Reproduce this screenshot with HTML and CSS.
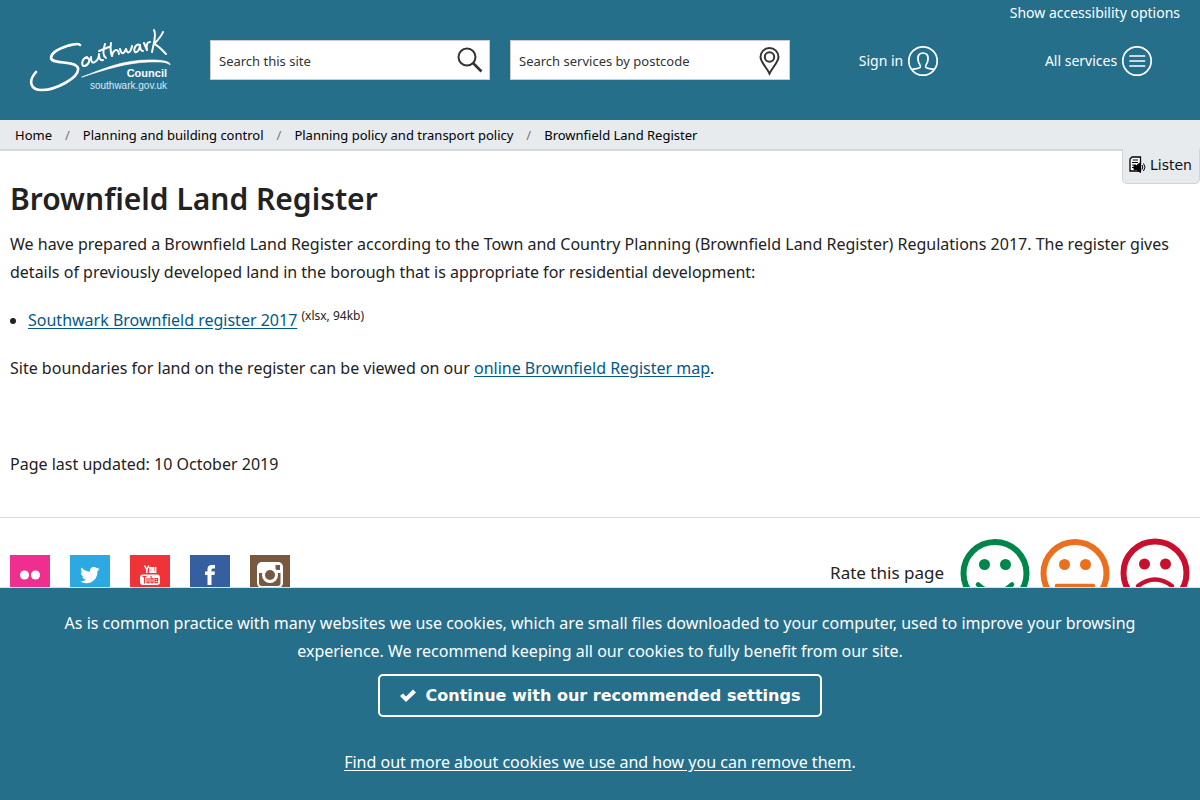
FILE: index.html
```html
<!DOCTYPE html>
<html lang="en">
<head>
<meta charset="utf-8">
<meta name="viewport" content="width=device-width, initial-scale=1">
<title>Brownfield Land Register - Southwark Council</title>
<link rel="stylesheet" href="styles.css">
</head>
<body>
<header class="site-header">
  <div class="access-row"><a class="access-link" href="#">Show accessibility options</a></div>
  <div class="header-grid">
    <a class="logo" href="#" aria-label="Southwark Council home">
      <svg width="142" height="68" viewBox="29 26 142 68" fill="none" stroke="#fff" stroke-linecap="round" stroke-linejoin="round">
        <path stroke-width="2.6" d="M80 45C79 43 74 44 67 46C58 49 51 53 51 58C52 65 75 60 78 68C80 78 55 90 42 90C30 90 28 81 36 72"/>
        <path stroke-width="2" d="M87 57C81 59 81 67 85 66C90 64 91 57 86 58M91 57C91 61 92 64 95 62C98 60 99 57 99 54C99 58 100 61 103 60M105 44C103 50 103 56 106 58M99 51L109 47M111 43C110 48 111 54 112 56C113 50 118 47 119 54M120 49C121 53 123 56 126 49C127 53 130 55 132 46M140 45C136 43 133 49 135 52C138 53 140 48 140 45C140 49 141 51 143 51M144 43L147 50C146 45 147 42 150 42M154 30C157 35 153 46 152 52M163 32C161 37 157 41 154 44C158 45 162 50 166 54"/>
        <path fill="#fff" stroke-width=".7" d="M82 77C106 68 122 60 151 60C160 60 171 61 170 65C167 61 155 62 148 62C126 63 107 69 82 77Z"/>
        <text class="logo-name" x="167" y="77" text-anchor="end">Council</text>
        <text class="logo-url" x="167" y="89" text-anchor="end">southwark.gov.uk</text>
      </svg>
    </a>
    <form class="search">
      <input class="search-input" type="text" placeholder="Search this site" aria-label="Search this site">
      <button class="search-button" type="button" aria-label="Search">
        <svg width="40" height="38" viewBox="449 41 40 38" fill="none" stroke="#333"><circle cx="467" cy="57" r="8.500" stroke-width="2"/><path stroke-width="2.600" d="M473 63L481.500 71.500"/></svg>
      </button>
    </form>
    <form class="search">
      <input class="search-input" type="text" placeholder="Search services by postcode" aria-label="Search services by postcode">
      <button class="search-button" type="button" aria-label="Find by postcode">
        <svg width="40" height="38" viewBox="749 41 40 38" fill="none" stroke="#333" stroke-width="2"><path d="M769.500 73.500C767 68 760.500 62 760.500 57A9 9 0 0 1 778.500 57C778.500 62 772 68 769.500 73.500Z"/><circle cx="769.500" cy="57" r="4.700"/></svg>
      </button>
    </form>
    <a class="header-link" href="#">Sign in
      <svg width="32" height="32" viewBox="0 0 32 32" fill="none" stroke="#fff" stroke-width="1.700"><circle cx="16" cy="16" r="14.200"/><path d="M5 24.500C8 23.500 11 24 13.200 22.300C14.200 21 12.500 19.500 11.500 17C9.800 11 12 8 16 8C20 8 22.200 11 20.500 17C19.500 19.500 17.800 21 18.800 22.300C21 24 24 23.500 27 24.500"/></svg>
    </a>
    <a class="header-link" href="#">All services
      <svg width="32" height="32" viewBox="0 0 32 32" fill="none" stroke="#fff" stroke-width="1.700"><circle cx="16" cy="16" r="14.200"/><path stroke-linecap="round" d="M9 11H23.500M9 16H23.500M9 21H23.500"/></svg>
    </a>
  </div>
</header>
<nav class="breadcrumbs" aria-label="Breadcrumb">
  <a class="crumb" href="#">Home</a><span class="crumb-sep">/</span>
  <a class="crumb" href="#">Planning and building control</a><span class="crumb-sep">/</span>
  <a class="crumb" href="#">Planning policy and transport policy</a><span class="crumb-sep">/</span>
  <a class="crumb" href="#" aria-current="page">Brownfield Land Register</a>
  <button class="listen" type="button">
    <svg width="18" height="18" viewBox="0 0 18 18" fill="none" stroke="#000"><path fill="#fff" stroke-width="1.300" d="M3 1H11.500V15H1V3Z"/><path d="M3.500 4H9M3 6.500H9M3 9H7M3 11.500H5"/><path fill="#000" d="M5 9.500H7.500L11.500 6.500V16.500L7.500 13.500H5Z"/><path d="M13 9Q14.500 11 13 13.500M14.500 7.500Q17.500 11 14.500 15"/></svg>
    Listen
  </button>
</nav>
<main class="content">
  <h1 class="title">Brownfield Land Register</h1>
  <p class="para">We have prepared a Brownfield Land Register according to the Town and Country Planning (Brownfield Land Register) Regulations 2017. The register gives details of previously developed land in the borough that is appropriate for residential development:</p>
  <ul class="files">
    <li><a class="link" href="#">Southwark Brownfield register 2017</a> <span class="file-info">(xlsx, 94kb)</span></li>
  </ul>
  <p class="para">Site boundaries for land on the register can be viewed on our <a class="link" href="#">online Brownfield Register map</a>.</p>
  <p class="para updated">Page last updated: 10 October 2019</p>
</main>
<footer class="site-footer">
  <div class="social">
    <a class="social-link flickr" href="#" aria-label="Flickr"><svg width="40" height="40" viewBox="0 0 40 40" fill="#fff"><circle cx="14.500" cy="20" r="4.600"/><circle cx="25.500" cy="20" r="4.600"/></svg></a>
    <a class="social-link twitter" href="#" aria-label="Twitter"><svg width="40" height="40" viewBox="0 0 40 40"><path fill="#fff" d="M30 13.800L27.400 16.200C28 23.500 22 28.500 16 28.200C13.800 28.200 12 27.500 10.500 26.300C13 26.500 15 25.800 16 24.600C14 24.400 12.700 23.300 12.200 21.700H13.800C12 21 10.800 19.500 10.800 17.300L12.500 17.800C11 16.500 10.500 14.500 11.600 12.600C13.700 15.200 16.700 16.600 20 16.700C19.500 13.500 22 11.600 24.200 12C25.500 12.100 26.300 12.700 26.900 13.300L29.300 12.400L27.700 14.500Z"/></svg></a>
    <a class="social-link youtube" href="#" aria-label="YouTube"><svg width="40" height="40" viewBox="0 0 40 40" fill="none" stroke-width="1.500"><path stroke="#fff" d="M14.500 10.500L16.800 14.500L19 10.500M16.800 14V18M20 12.700H22V17.200H20ZM23.600 12V17.200H25.500M25.600 12V18"/><rect x="10" y="19.500" width="20" height="10.500" rx="3" fill="#fff"/><path stroke="#ee3439" stroke-width="1.200" d="M12.500 21.700H16.500M14.500 21.700V28.500M17 23V27.700H19V23M19 27V28.500M21 21V28M21 23.500H23V27.700H21M27.500 26.500V27.700H25V23.500H27.500V25.500H25"/></svg></a>
    <a class="social-link facebook" href="#" aria-label="Facebook"><svg width="40" height="40" viewBox="0 0 40 40"><path fill="#fff" d="M17.500 30V20H15V16.500H17.500V14C17.500 11.500 19 10 22 10H25V13.500H23C22 13.500 21.500 14 21.500 15V16.500H25L24.500 20H21.500V30Z"/></svg></a>
    <a class="social-link instagram" href="#" aria-label="Instagram"><svg width="40" height="40" viewBox="0 0 40 40"><rect x="7" y="7" width="26" height="26" rx="5" fill="#fff"/><rect x="25.500" y="10" width="4.500" height="5" fill="#785940"/><path fill="#785940" d="M9 18H30.500V28Q30.500 31 27.500 31H12Q9 31 9 28Z"/><circle cx="20" cy="20" r="8" fill="#fff"/><circle cx="20" cy="20" r="5" fill="#785940"/></svg></a>
  </div>
  <div class="rating">
    <span class="rating-label">Rate this page</span>
    <button class="face good" type="button" aria-label="Good"><svg width="70" height="70" viewBox="0 0 70 70" fill="none" stroke="currentColor"><circle cx="35" cy="35.500" r="31.500" stroke-width="6"/><g fill="currentColor" stroke="none"><circle cx="24.500" cy="26.500" r="5.500"/><circle cx="45.500" cy="26.500" r="5.500"/></g><path stroke-width="4.500" stroke-linecap="round" d="M18 46.500Q35 62 52 46.500"/></svg></button>
    <button class="face average" type="button" aria-label="Average"><svg width="70" height="70" viewBox="0 0 70 70" fill="none" stroke="currentColor"><circle cx="35" cy="35.500" r="31.500" stroke-width="6"/><g fill="currentColor" stroke="none"><circle cx="24.500" cy="26.500" r="5.500"/><circle cx="45.500" cy="26.500" r="5.500"/></g><path stroke-width="4.500" stroke-linecap="round" d="M17 48H53"/></svg></button>
    <button class="face poor" type="button" aria-label="Poor"><svg width="70" height="70" viewBox="0 0 70 70" fill="none" stroke="currentColor"><circle cx="35" cy="35" r="31.500" stroke-width="6"/><g fill="currentColor" stroke="none"><circle cx="24.500" cy="26" r="5.500"/><circle cx="45.500" cy="26" r="5.500"/></g><path stroke-width="4.500" stroke-linecap="round" d="M18 48Q35 35 52 48"/></svg></button>
  </div>
</footer>
<section class="cookies" aria-label="Cookies">
  <p class="cookie-text">As is common practice with many websites we use cookies, which are small files downloaded to your computer, used to improve your browsing experience. We recommend keeping all our cookies to fully benefit from our site.</p>
  <button class="cookie-button" type="button"><svg width="16" height="14" viewBox="0 0 16 14"><path fill="#fff" d="M0 7L3 4.500L6 7.500L13 0.500L16 3.500L6 13Z"/></svg>Continue with our recommended settings</button>
  <p class="cookie-more"><a class="cookie-link" href="#">Find out more about cookies we use and how you can remove them</a>.</p>
</section>
</body>
</html>
```
FILE: styles.css
```css
* { box-sizing: border-box; }
body {
  margin: 0;
  padding-bottom: 212px;
  background: #fff;
  color: #222;
  font: 16px/28px "Noto Sans", "Open Sans", sans-serif;
}
svg { display: block; flex: none; }
button { padding: 0; border: 0; background: none; color: inherit; cursor: pointer; }

.site-header { min-height: 120px; background: #266f8b; color: #fff; }
.access-row { display: flex; justify-content: flex-end; height: 25px; padding-right: 20px; line-height: 26px; }
.access-link { color: #fff; font-size: 14px; text-decoration: none; }
.header-grid { display: grid; grid-template-columns: 2fr 3fr 3fr 2fr 2fr; align-items: center; height: 70px; }
.logo { justify-self: center; }
.logo-name { fill: #fff; stroke: none; font: bold 11px "Liberation Sans", Arial, sans-serif; }
.logo-url { fill: #dceaf0; stroke: none; font: 10px "Liberation Sans", Arial, sans-serif; }
.search { display: flex; height: 40px; margin: 0 10px; border: 1px solid #ccc; background: #fff; }
.search-input { flex: 1; min-width: 0; padding: 2px 8px 0; border: 0; background: none; color: #333; font: 13px "Noto Sans", sans-serif; }
.search-input::placeholder { color: #333; opacity: 1; }
.header-link { display: flex; align-items: center; justify-content: center; gap: 4px; padding: 2px 2px 0 0; color: #fff; font-size: 14px; text-decoration: none; }

.breadcrumbs { position: relative; display: flex; min-height: 31px; padding: 1px 0 0 15px; border-bottom: 2px solid #d5d9dc; background: #e7ebee; font-size: 13px; line-height: 28px; }
.crumb { color: #000; text-decoration: none; }
.crumb-sep { margin: 0 13px; color: #777; }
.listen { position: absolute; top: 29px; right: 0; display: flex; align-items: center; gap: 3px; height: 35px; padding: 0 7px 2px 6px; border: 1px solid #d0d4d8; border-top: 0; border-radius: 0 0 5px 5px; background: #e7ebee; color: #111; font: 14px "DejaVu Sans", sans-serif; }

.content { padding: 0 10px; }
.title { margin: 25px 0 8px; font-size: 30px; font-weight: 600; line-height: 46px; }
.para { margin: 0 0 20px; }
.files { margin: 0 0 20px; padding-left: 18px; }
.link { color: #005a87; text-underline-offset: 2px; }
.file-info { font-size: 12px; line-height: 0; vertical-align: 6px; }
.updated { margin: 68px 0 39px; }

.site-footer { display: flex; justify-content: space-between; padding: 20px 10px; border-top: 1px solid #ddd; }
.social { display: flex; gap: 20px; padding-top: 17px; }
.social-link { height: 40px; }
.flickr { background: #ee2f8f; }
.twitter { background: #2ba9e0; }
.youtube { background: #ee3439; }
.facebook { background: #365f9f; }
.instagram { background: #785940; }
.rating { display: flex; align-items: center; gap: 10px; }
.rating-label { margin-right: 6px; font-size: 17px; }
.good { color: #00854a; }
.average { color: #ea6f1f; }
.poor { color: #c8102e; }

.cookies { position: fixed; right: 0; bottom: 0; left: 0; display: flex; flex-direction: column; align-items: center; min-height: 213px; padding: 21px 40px 24px; border-top: 1px solid #d5e2e8; background: #266f8b; color: #fff; text-align: center; }
.cookie-text { margin: 0 0 9px; }
.cookie-button { display: flex; align-items: center; gap: 10px; height: 43px; padding: 0 20px; border: 2px solid #fff; border-radius: 5px; color: #fff; font: bold 16px "DejaVu Sans", sans-serif; }
.cookie-more { margin: 31px 0 0; }
.cookie-link { color: #fff; text-underline-offset: 2px; }
```
